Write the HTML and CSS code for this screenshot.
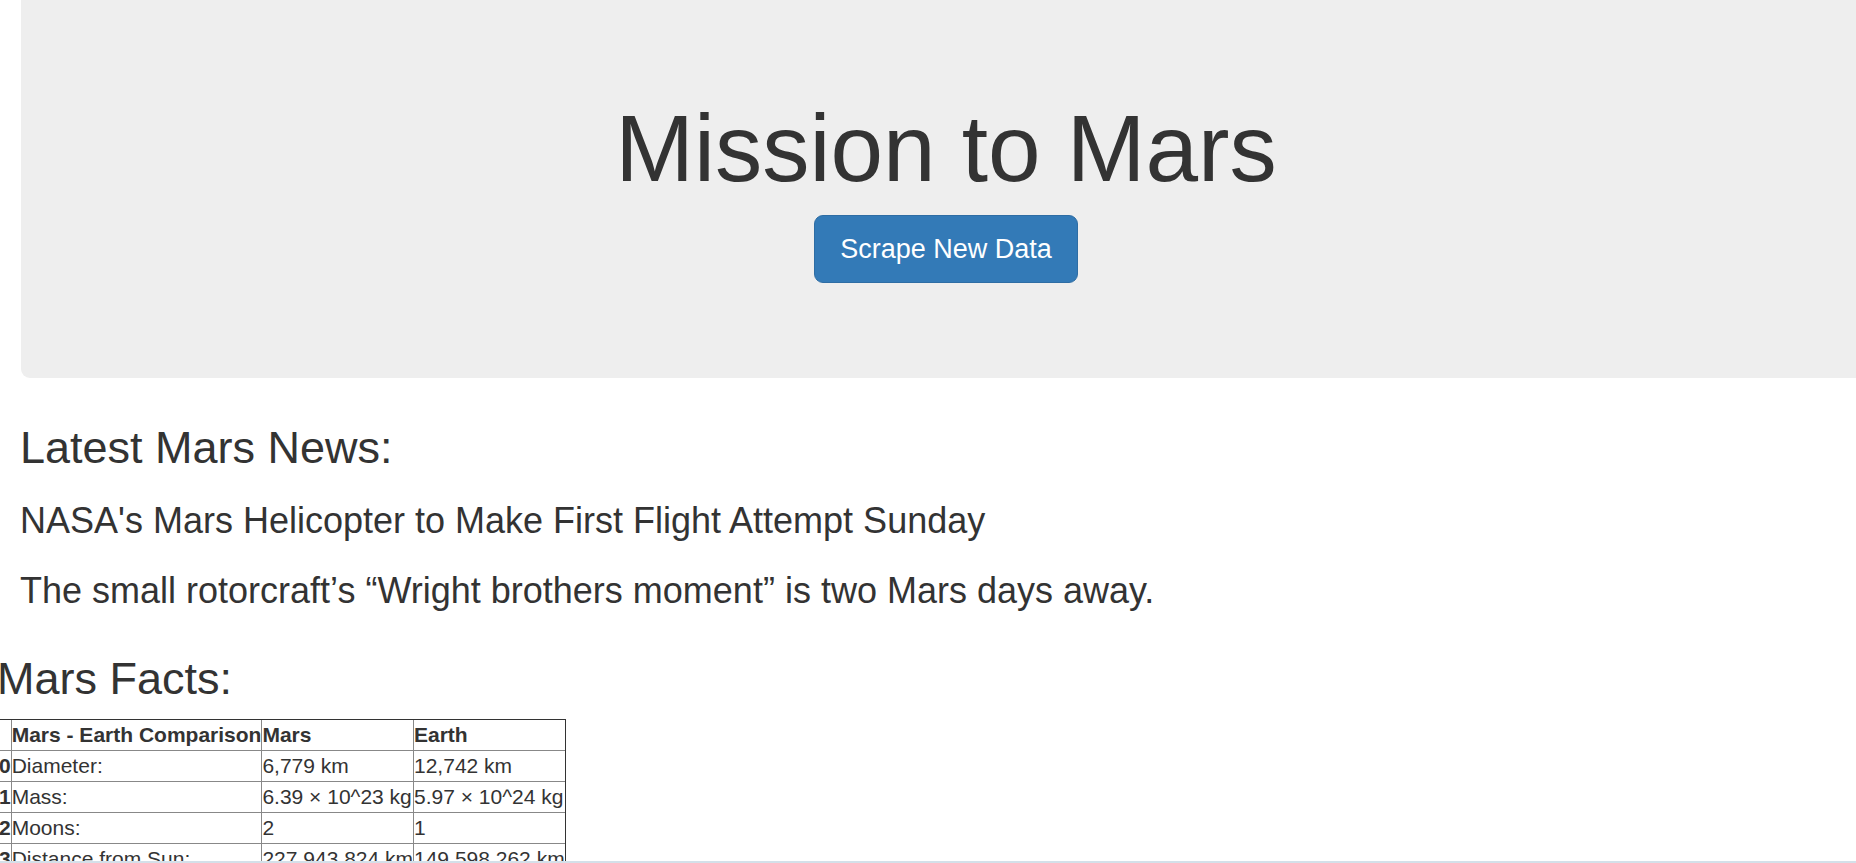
FILE: index.html
```html
<!DOCTYPE html>
<html lang="en">
<head>
<meta charset="utf-8">
<title>Mission to Mars</title>
<link rel="stylesheet" href="styles.css">
</head>
<body>
  <div class="jumbotron">
    <h1 class="title">Mission to Mars</h1>
    <p class="actions"><a class="btn" href="#">Scrape New Data</a></p>
  </div>

  <div class="news">
    <h2 class="section-title">Latest Mars News:</h2>
    <h3 class="news-title">NASA's Mars Helicopter to Make First Flight Attempt Sunday</h3>
    <h3 class="news-teaser">The small rotorcraft’s “Wright brothers moment” is two Mars days away.</h3>
  </div>

  <div class="facts">
    <h2 class="facts-title">Mars Facts:</h2>
    <table class="dataframe">
      <thead>
        <tr><th></th><th>Mars - Earth Comparison</th><th>Mars</th><th>Earth</th></tr>
      </thead>
      <tbody>
        <tr><th>0</th><td>Diameter:</td><td>6,779 km</td><td>12,742 km</td></tr>
        <tr><th>1</th><td>Mass:</td><td>6.39 × 10^23 kg</td><td>5.97 × 10^24 kg</td></tr>
        <tr><th>2</th><td>Moons:</td><td>2</td><td>1</td></tr>
        <tr><th>3</th><td>Distance from Sun:</td><td>227,943,824 km</td><td>149,598,262 km</td></tr>
      </tbody>
    </table>
  </div>

  <div class="scroll-edge"></div>
</body>
</html>
```

FILE: styles.css
```css
html {
  overflow: hidden;
}

body {
  margin: 0;
  font-family: "Liberation Sans", Arial, Helvetica, sans-serif;
  color: #333;
  background: #fff;
}

.jumbotron {
  margin: 0 -15px 0 21px;
  padding: 95.5px 0 95px;
  background: #eee;
  border-radius: 0 0 9px 9px;
  text-align: center;
}

.title {
  margin: 0 0 15px;
  font-size: 94.5px;
  line-height: 104px;
  font-weight: 400;
}

.actions {
  margin: 0;
  display: flex;
  justify-content: center;
}

.btn {
  box-sizing: border-box;
  height: 68px;
  padding: 15px 25px;
  border: 1px solid #2e6da4;
  border-radius: 9px;
  background: #337ab7;
  color: #fff;
  font-size: 27px;
  line-height: 36px;
  text-decoration: none;
  white-space: nowrap;
}

.news {
  padding-left: 20px;
}

.section-title {
  margin: 45.5px 0 0;
  font-size: 45px;
  line-height: 49.5px;
  font-weight: 400;
}

.news-title {
  margin: 28.5px 0 0;
  font-size: 36px;
  line-height: 39.6px;
  font-weight: 400;
}

.news-teaser {
  margin: 30px 0 0;
  font-size: 36px;
  line-height: 39.6px;
  font-weight: 400;
}

.facts-title {
  margin: 44px 0 0 -3px;
  font-size: 45px;
  line-height: 49.5px;
  font-weight: 400;
}

.dataframe {
  margin: 15.5px 0 0 -2px;
  border-spacing: 0;
  border-top: 1px solid #333;
  border-right: 1px solid #333;
  border-left: 1px solid #333;
  font-size: 21px;
  line-height: 30px;
}

.dataframe th,
.dataframe td {
  padding: 0;
  border-left: 1px solid #888;
  border-bottom: 1px solid #888;
  white-space: nowrap;
  text-align: left;
  vertical-align: top;
}

.dataframe th:first-child {
  border-left: none;
}

.dataframe th {
  font-weight: 700;
}

.dataframe td {
  font-weight: 400;
}

.scroll-edge {
  position: fixed;
  left: 0;
  right: 0;
  bottom: 0;
  height: 2px;
  background: #d4e0e9;
}
```
